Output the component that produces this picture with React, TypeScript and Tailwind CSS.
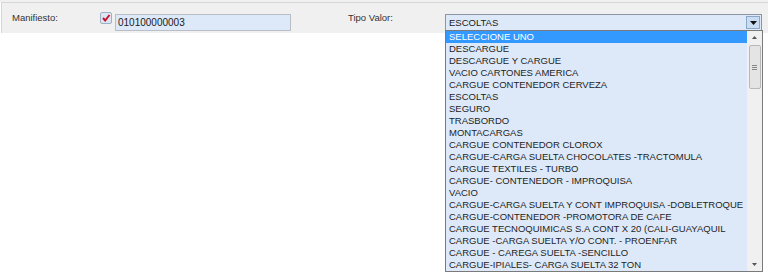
import React from "react";

const items = [
  "SELECCIONE UNO",
  "DESCARGUE",
  "DESCARGUE Y CARGUE",
  "VACIO CARTONES AMERICA",
  "CARGUE CONTENEDOR CERVEZA",
  "ESCOLTAS",
  "SEGURO",
  "TRASBORDO",
  "MONTACARGAS",
  "CARGUE CONTENEDOR CLOROX",
  "CARGUE-CARGA SUELTA CHOCOLATES -TRACTOMULA",
  "CARGUE TEXTILES - TURBO",
  "CARGUE- CONTENEDOR - IMPROQUISA",
  "VACIO",
  "CARGUE-CARGA SUELTA Y CONT IMPROQUISA -DOBLETROQUE",
  "CARGUE-CONTENEDOR -PROMOTORA DE CAFE",
  "CARGUE TECNOQUIMICAS S.A CONT X 20 (CALI-GUAYAQUIL",
  "CARGUE -CARGA SUELTA Y/O CONT. - PROENFAR",
  "CARGUE - CAREGA SUELTA -SENCILLO",
  "CARGUE-IPIALES- CARGA SUELTA 32 TON",
];

export default function App() {
  return (
    <div
      className="relative w-[768px] h-[274px] bg-white text-[#222]"
      style={{ fontFamily: '"Liberation Sans", Arial, sans-serif' }}
    >
      <div className="h-[2px] bg-[#f0f0f0]" />
      <div className="h-[31px] bg-[#f0f0f0] border-t border-l border-[#d6d6d6] ml-[1px] flex items-start">
        <div className="w-[98px] pl-[10px] pt-[9px] text-[9.5px] leading-[12px] text-[#333]">Manifiesto:</div>
        <div className="mt-[9px] w-[12px] h-[12px] rounded-[2px] border border-[#9fb0c4] bg-[#dce6f2] flex items-center justify-center">
          <svg width="10" height="10" viewBox="0 0 10 10">
            <path d="M2 5 L4.2 7.5 L8.5 2" stroke="#c8102e" strokeWidth="2" fill="none" />
          </svg>
        </div>
        <div className="ml-[3px] mt-[11px] w-[176px] h-[17px] border border-[#b9bec6] bg-[#dde9f9] text-[10px] leading-[15px] pl-[2px] text-[#1a1a1a]">
          010100000003
        </div>
        <div className="ml-[57px] pt-[9px] w-[97px] text-[9.5px] leading-[12px] text-[#333]">Tipo Valor:</div>
        <div className="mt-[11px] w-[317px] h-[17px] border border-[#8d97a3] bg-[#dde9f9] flex items-center justify-between">
          <span className="pl-[3px] text-[9.5px] leading-[12px] text-[#1a1a1a]">ESCOLTAS</span>
          <div className="mr-[1px] w-[14px] h-[13px] border border-[#8ba6c6] bg-[#c9dcf2] flex items-center justify-center">
            <svg width="7" height="4" viewBox="0 0 7 4">
              <path d="M0 0 H7 L3.5 4 Z" fill="#111" />
            </svg>
          </div>
        </div>
      </div>

      <div className="absolute left-[445px] top-[30px] w-[318px] h-[242px] border border-[#7a7a7a] bg-[#dde9f9] flex">
        <div className="flex-1 min-w-0 overflow-hidden flex flex-col">
          {items.map((it, i) => (
            <div
              key={i}
              className={
                i === 0
                  ? "h-[12px] bg-[#3399ff] text-white text-[9.5px] leading-[12px] pl-[3px] whitespace-nowrap"
                  : "h-[12px] text-[#1e1e1e] text-[9.5px] leading-[12px] pl-[3px] whitespace-nowrap"
              }
            >
              {it}
            </div>
          ))}
        </div>
        <div className="w-[15px] shrink-0 bg-[#f0f0f0] flex flex-col items-center">
          <div className="h-[13px] flex items-center justify-center">
            <svg width="5" height="3" viewBox="0 0 5 3">
              <path d="M0 3 L2.5 0 L5 3 Z" fill="#555" />
            </svg>
          </div>
          <div className="w-[12px] h-[44px] mt-[1px] rounded-[2px] border border-[#b8b8b8] bg-[#e4e4e4] flex flex-col items-center justify-center gap-[1px]">
            <div className="w-[5px] h-px bg-[#888]" />
            <div className="w-[5px] h-px bg-[#888]" />
            <div className="w-[5px] h-px bg-[#888]" />
          </div>
          <div className="flex-1" />
          <div className="h-[13px] flex items-center justify-center">
            <svg width="5" height="3" viewBox="0 0 5 3">
              <path d="M0 0 L2.5 3 L5 0 Z" fill="#555" />
            </svg>
          </div>
        </div>
      </div>
    </div>
  );
}
